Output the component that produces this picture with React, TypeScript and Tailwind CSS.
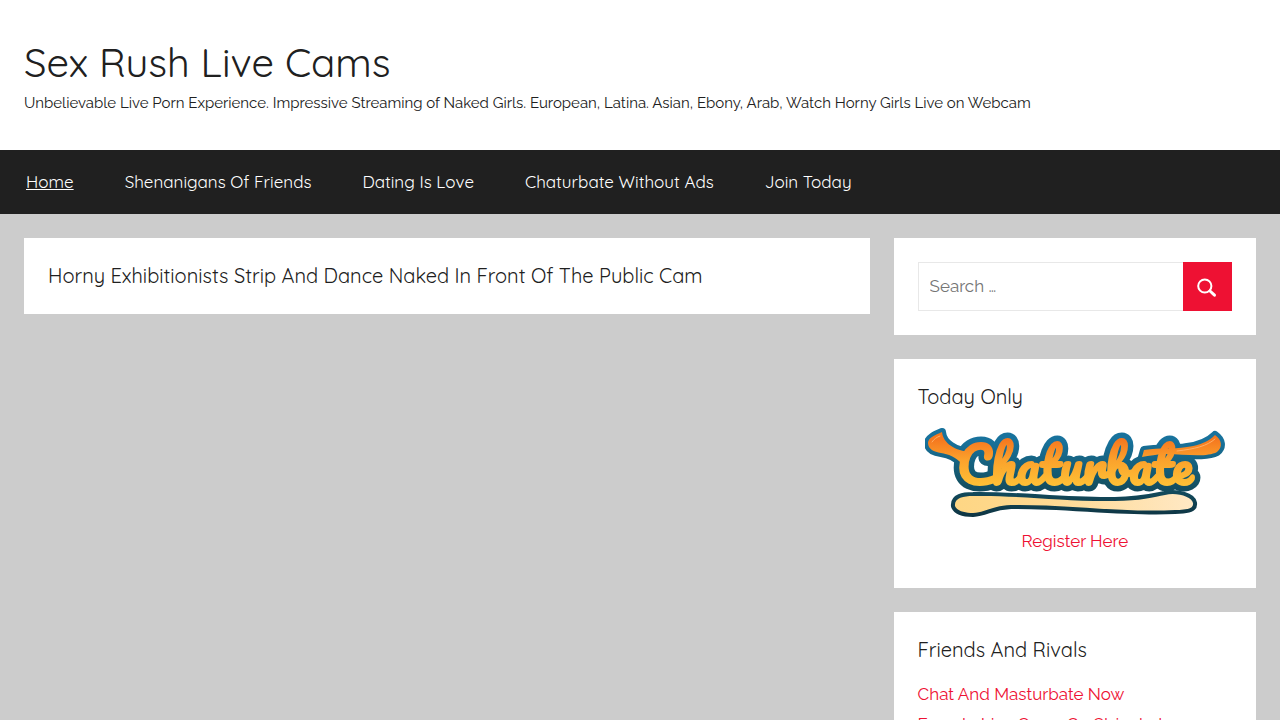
const navItems = ["Home", "Shenanigans Of Friends", "Dating Is Love", "Chaturbate Without Ads", "Join Today"];

const friendLinks = ["Chat And Masturbate Now", "Female Live Cams On Stripchat"];

function SearchIcon() {
  return (
    <svg viewBox="0 0 22 22" className="size-[22px]" fill="none" stroke="#fff" aria-hidden="true">
      <circle cx="7.800" cy="10" r="6.600" strokeWidth="2" />
      <path d="M13 15L17.500 19.200" strokeWidth="3" strokeLinecap="round" />
    </svg>
  );
}

function Logo() {
  const leftSwash = "M17 5C10 8 3 11 3 16C3 22 9 25 16 26C23 27 31 30 37 37L46 25C30 24 18 16 17 5Z";
  const rightSwash = "M219 23C236 20 246 23 262 20C276 18 284 14 290 8C297 13 298 20 292 25C281 31 258 27 242 27C232 27 224 29 217 30Z";
  const bat = "M30 79C29 71 38 69 48 69C90 68 140 75 190 74C214 74 230 70 240 68C252 65 267 70 268 76C269 82 260 83 250 83C200 86 140 77 86 78C66 79 62 85 48 86C40 86 32 84 30 79Z";
  return (
    <svg viewBox="0 0 300 90" className="h-[90px] w-[300px]" role="img" aria-label="Chaturbate">
      <defs>
        <linearGradient id="letters" gradientUnits="userSpaceOnUse" x1="0" y1="4" x2="0" y2="62">
          <stop offset="0.150" stopColor="#f5781f" />
          <stop offset="0.500" stopColor="#fba22c" />
          <stop offset="1" stopColor="#fec437" />
        </linearGradient>
        <linearGradient id="edge" gradientUnits="userSpaceOnUse" x1="0" y1="0" x2="0" y2="90">
          <stop offset="0.150" stopColor="#18729c" />
          <stop offset="0.600" stopColor="#145468" />
          <stop offset="1" stopColor="#0e3442" />
        </linearGradient>
        <linearGradient id="cream" x1="0" y1="0" x2="1" y2="0">
          <stop offset="0" stopColor="#fed684" />
          <stop offset="0.400" stopColor="#fed992" />
          <stop offset="1" stopColor="#ffe8c4" />
        </linearGradient>
        <text id="wordmark" x="32" y="58" fontSize="50" fontFamily="Pacifico, Lobster, cursive">Chaturbate</text>
      </defs>
      <g fill="url(#edge)" stroke="url(#edge)" strokeWidth="8" strokeLinejoin="round">
        <path d={leftSwash} />
        <path d={rightSwash} />
        <path d={bat} />
        <use href="#wordmark" strokeWidth="13" />
      </g>
      <use href="#wordmark" fill="url(#letters)" stroke="url(#letters)" strokeWidth="2" strokeLinejoin="round" />
      <path d={bat} fill="url(#cream)" />
      <path d={leftSwash} fill="url(#letters)" />
      <path d={rightSwash} fill="url(#letters)" />
      <path d="M7 15C9 12 12 10 15 9M252 24C270 22 282 19 290 12" fill="none" stroke="#ffb066" strokeWidth="1" strokeLinecap="round" />
    </svg>
  );
}

function WidgetTitle({ children }: { children: string }) {
  return <h2 className="font-['Quicksand',sans-serif] text-[20px] leading-7">{children}</h2>;
}

export default function App() {
  return (
    <div className="min-h-screen bg-[#ccc] font-['Raleway',sans-serif] text-[17px] leading-[30px] text-[#202020]">
      <header className="bg-white px-6 pt-[35px] pb-[33px]">
        <h1 className="font-['Quicksand',sans-serif] text-[40px] leading-[54px]">Sex Rush Live Cams</h1>
        <p className="text-[15px] leading-7">
          Unbelievable Live Porn Experience. Impressive Streaming of Naked Girls. European, Latina. Asian, Ebony, Arab, Watch Horny Girls Live on Webcam
        </p>
      </header>
      <nav className="bg-[#202020] px-[26px] py-[17px] font-['Quicksand',sans-serif] text-white">
        <ul className="flex flex-wrap gap-x-[51px]">
          {navItems.map((item) => (
            <li key={item}>
              <a href="#" className={item === "Home" ? "underline" : "hover:underline"}>{item}</a>
            </li>
          ))}
        </ul>
      </nav>
      <div className="grid grid-cols-[7fr_3fr] items-start gap-6 p-6">
        <main className="bg-white p-6">
          <WidgetTitle>Horny Exhibitionists Strip And Dance Naked In Front Of The Public Cam</WidgetTitle>
        </main>
        <aside className="flex min-w-0 flex-col gap-6">
          <form role="search" className="flex bg-white p-6">
            <input type="search" aria-label="Search for" placeholder="Search …" className="h-[49px] min-w-0 flex-1 border border-r-0 border-[#e8e8e8] px-[11px] pb-[2px] placeholder:text-[#757575]" />
            <button type="button" aria-label="Search" className="flex size-[49px] items-center justify-center bg-[#ee1133]">
              <SearchIcon />
            </button>
          </form>
          <section className="bg-white p-6 pb-8">
            <WidgetTitle>Today Only</WidgetTitle>
            <a href="#" className="mt-4 flex flex-col items-center gap-[9px] text-[#ee1133]">
              <Logo />
              Register Here
            </a>
          </section>
          <section className="bg-white p-6">
            <WidgetTitle>Friends And Rivals</WidgetTitle>
            <ul className="mt-[15px]">
              {friendLinks.map((link) => (
                <li key={link}><a href="#" className="text-[#ee1133]">{link}</a></li>
              ))}
            </ul>
          </section>
        </aside>
      </div>
    </div>
  );
}
